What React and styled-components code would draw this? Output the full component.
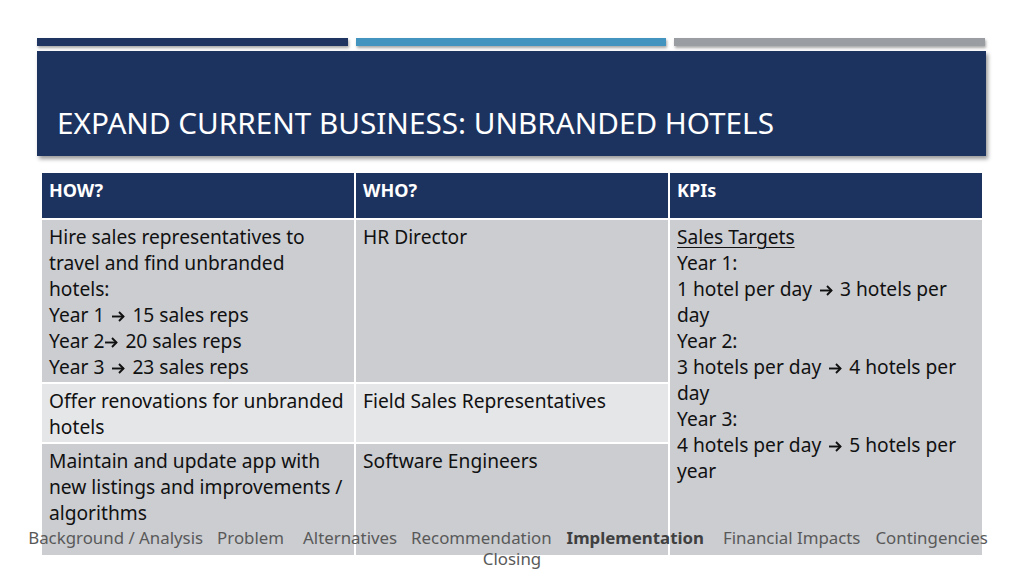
import React from "react";
import styled, { createGlobalStyle } from "styled-components";

const GlobalStyle = createGlobalStyle`
  html, body {
    margin: 0;
    padding: 0;
    background: #fff;
  }
  body {
    font-family: "Noto Sans", "Open Sans", "Liberation Sans", sans-serif;
  }
`;

const Slide = styled.div`
  position: relative;
  width: 1024px;
  height: 575px;
  overflow: hidden;
  background: #fff;
  padding: 38px 38px 0 37px;
  box-sizing: border-box;
`;

const Bars = styled.div`
  display: grid;
  grid-template-columns: 311px 310px 311px;
  column-gap: 8px;
  width: 949px;
`;

const Bar = styled.div`
  height: 8px;
  background: ${(p) => p.color};
  box-shadow: 1px 2px 3px rgba(0, 0, 0, 0.35);
`;

const TitlePanel = styled.div`
  margin-top: 5px;
  width: 949px;
  height: 105px;
  background: #1c3360;
  box-shadow: 2px 3px 4px rgba(0, 0, 0, 0.4);
  display: flex;
  align-items: flex-end;
  padding: 0 0 15px 20px;
  box-sizing: border-box;
`;

const Title = styled.h1`
  margin: 0;
  color: #fff;
  font-weight: 400;
  font-size: 29.7px;
  line-height: 36px;
`;

const Table = styled.div`
  margin: 17px 0 0 5px;
  display: grid;
  grid-template-columns: 312px 312px 312px;
  grid-template-rows: 45px 162px 58px 111px;
  gap: 2px;
  width: 940px;
`;

const Th = styled.div`
  background: #1c3360;
  color: #fff;
  font-weight: 700;
  font-size: 18px;
  line-height: 22px;
  padding: 6px 7px;
`;

const Td = styled.div`
  background: ${(p) => (p.light ? "#e5e6e8" : "#cbcdd1")};
  color: #111;
  font-size: 19.2px;
  line-height: 26px;
  padding: 4px 7px;
  grid-column: ${(p) => p.col};
  grid-row: ${(p) => p.row};
`;

const Line = styled.div`
  text-decoration: ${(p) => (p.underline ? "underline" : "none")};
  text-underline-offset: 3px;
  text-decoration-thickness: 1px;
`;

const ArrowIcon = styled.svg`
  display: inline-block;
  width: 13px;
  height: 11px;
  margin: 0 7px 0 ${(p) => (p.tight ? 1 : 8)}px;
  vertical-align: 0px;
`;

const Arrow = ({ tight }) => (
  <ArrowIcon tight={tight} viewBox="0 0 13 11" fill="none" stroke="#111" strokeWidth="1.9">
    <path d="M0 5.5 H11.5" />
    <path d="M7 1 L11.5 5.5 L7 10" />
  </ArrowIcon>
);

const Footer = styled.div`
  position: absolute;
  left: 0;
  right: 0;
  top: 527px;
  text-align: center;
  font-size: 16.85px;
  line-height: 21px;
  color: #595959;
`;

const NavRow = styled.div`
  white-space: nowrap;
  margin-left: ${(p) => p.shift || 0}px;
`;

const NavItem = styled.span`
  margin-left: ${(p) => p.gap || 0}px;
  font-weight: ${(p) => (p.active ? 700 : 400)};
  color: ${(p) => (p.active ? "#404040" : "#595959")};
`;

const navItems = [
  { label: "Background / Analysis", gap: 0 },
  { label: "Problem", gap: 14 },
  { label: "Alternatives", gap: 19 },
  { label: "Recommendation", gap: 14 },
  { label: "Implementation", gap: 15, active: true },
  { label: "Financial Impacts", gap: 19 },
  { label: "Contingencies", gap: 15 },
];

const App = () => {
  return (
    <Slide>
      <GlobalStyle />
      <Bars>
        <Bar color="#1f3461" />
        <Bar color="#4494c0" />
        <Bar color="#9a9ea3" />
      </Bars>
      <TitlePanel>
        <Title>EXPAND CURRENT BUSINESS: UNBRANDED HOTELS</Title>
      </TitlePanel>

      <Table>
        <Th>HOW?</Th>
        <Th>WHO?</Th>
        <Th>KPIs</Th>

        <Td col="1" row="2">
          <Line>Hire sales representatives to travel and find unbranded hotels:</Line>
          <Line>Year 1<Arrow />15 sales reps</Line>
          <Line>Year 2<Arrow tight />20 sales reps</Line>
          <Line>Year 3<Arrow />23 sales reps</Line>
        </Td>
        <Td col="2" row="2">HR Director</Td>
        <Td col="3" row="2 / span 3">
          <Line underline>Sales Targets</Line>
          <Line>Year 1:</Line>
          <Line>1 hotel per day<Arrow />3 hotels per day</Line>
          <Line>Year 2:</Line>
          <Line>3 hotels per day<Arrow />4 hotels per day</Line>
          <Line>Year 3:</Line>
          <Line>4 hotels per day<Arrow />5 hotels per year</Line>
        </Td>

        <Td light col="1" row="3">Offer renovations for unbranded hotels</Td>
        <Td light col="2" row="3">Field Sales Representatives</Td>

        <Td col="1" row="4">Maintain and update app with new listings and improvements / algorithms</Td>
        <Td col="2" row="4">Software Engineers</Td>
      </Table>

      <Footer>
        <NavRow shift={-8}>
          {navItems.map((item) => (
            <NavItem key={item.label} gap={item.gap} active={item.active}>
              {item.label}
            </NavItem>
          ))}
        </NavRow>
        <NavRow>Closing</NavRow>
      </Footer>
    </Slide>
  );
};

export default App;
